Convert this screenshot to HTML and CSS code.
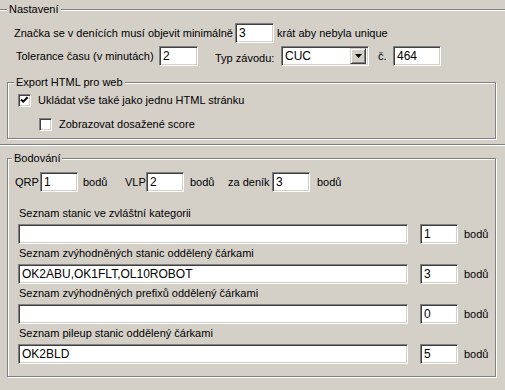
FILE: index.html
```html
<!DOCTYPE html>
<html>
<head>
<meta charset="utf-8">
<link rel="stylesheet" href="styles.css">
</head>
<body>
<div class="group g-main">
  <span class="gtitle">Nastavení</span>
  <div class="row r1">
    <span class="lbl w-znacka">Značka se v denících musí objevit minimálně</span>
    <div class="edit w39">3</div>
    <span class="lbl ml3">krát aby nebyla unique</span>
  </div>
  <div class="row r2">
    <span class="lbl w-tol">Tolerance času (v minutách)</span>
    <div class="edit w39">2</div>
    <span class="lbl w-typ">Typ závodu:</span>
    <div class="combo">
      <span class="combo-text">CUC</span>
      <span class="combo-btn"><svg width="7" height="4" viewBox="0 0 7 4"><path d="M0 0h7L3.5 4z" fill="#000"/></svg></span>
    </div>
    <span class="lbl w-c">č.</span>
    <div class="edit w48">464</div>
  </div>
  <div class="group g-export">
    <span class="gtitle">Export HTML pro web</span>
    <div class="crow c1">
      <span class="check"><svg width="9" height="9" viewBox="0 0 9 9"><path d="M1 3.5l2.2 2.2L7.6 1.3" fill="none" stroke="#000" stroke-width="2"/></svg></span>
      <span class="lbl">Ukládat vše také jako jednu HTML stránku</span>
    </div>
    <div class="crow c2">
      <span class="check"></span>
      <span class="lbl">Zobrazovat dosažené score</span>
    </div>
  </div>
</div>
<div class="group g-body">
  <span class="gtitle">Bodování</span>
  <div class="row r-qrp">
    <span class="lbl w-qrp">QRP</span>
    <div class="edit w38">1</div>
    <span class="lbl w-b1">bodů</span>
    <span class="lbl w-vlp">VLP</span>
    <div class="edit w38">2</div>
    <span class="lbl w-b2">bodů</span>
    <span class="lbl w-zd">za deník</span>
    <div class="edit w38">3</div>
    <span class="lbl ml7">bodů</span>
  </div>
  <div class="list first">
    <div class="list-label">Seznam stanic ve zvláštní kategorii</div>
    <div class="row">
      <div class="edit wide"></div>
      <div class="edit w38 ml12">1</div>
      <span class="lbl ml6">bodů</span>
    </div>
  </div>
  <div class="list">
    <div class="list-label">Seznam zvýhodněných stanic oddělený čárkami</div>
    <div class="row">
      <div class="edit wide">OK2ABU,OK1FLT,OL10ROBOT</div>
      <div class="edit w38 ml12">3</div>
      <span class="lbl ml6">bodů</span>
    </div>
  </div>
  <div class="list">
    <div class="list-label">Seznam zvýhodněných prefixů oddělený čárkami</div>
    <div class="row">
      <div class="edit wide"></div>
      <div class="edit w38 ml12">0</div>
      <span class="lbl ml6">bodů</span>
    </div>
  </div>
  <div class="list">
    <div class="list-label">Seznam pileup stanic oddělený čárkami</div>
    <div class="row">
      <div class="edit wide">OK2BLD</div>
      <div class="edit w38 ml12">5</div>
      <span class="lbl ml6">bodů</span>
    </div>
  </div>
</div>
</body>
</html>
```
FILE: styles.css
```css
html, body {
  margin: 0;
  padding: 0;
  background: #d4d0c8;
  width: 505px;
  height: 390px;
  overflow: hidden;
}
body {
  font-family: "Liberation Sans", Arial, sans-serif;
  font-size: 11px;
  line-height: 13px;
  color: #000;
}
.group {
  position: relative;
  border: 1px solid #808080;
  box-shadow: inset 1px 1px 0 #fff, 1px 1px 0 #fff;
}
.gtitle {
  position: absolute;
  top: -7px;
  left: 8px;
  padding: 0 2px;
  background: #d4d0c8;
  line-height: 13px;
  white-space: nowrap;
}
.g-main {
  margin: 9px 0 0 -2px;
  width: 512px;
  padding: 13px 0 5px 0;
}
.g-export .gtitle { left: 6px; }
.g-body .gtitle { left: 4px; }
.row {
  display: flex;
  align-items: center;
  height: 20px;
  white-space: nowrap;
}
.lbl { white-space: nowrap; }
.r1 { padding-left: 15px; }
.r2 { padding-left: 17px; margin-top: 3px; }
.w-znacka { width: 221px; }
.w-tol { width: 143px; }
.w-typ { width: 66px; margin-left: 17px; padding-top: 4px; }
.w-c { width: 15px; margin-left: 9px; }
.ml3 { margin-left: 3px; }
.ml6 { margin-left: 6px; }
.ml7 { margin-left: 7px; }
.ml12 { margin-left: 12px; }
.edit {
  box-sizing: border-box;
  height: 20px;
  background: #fff;
  border-top: 1px solid #808080;
  border-left: 1px solid #808080;
  border-bottom: 1px solid #fff;
  border-right: 1px solid #fff;
  box-shadow: inset 1px 1px 0 #404040, inset -1px -1px 0 #d4d0c8;
  padding: 2px 0 0 3px;
  line-height: 14px;
  font-size: 12px;
  white-space: nowrap;
  overflow: hidden;
}
.w39 { width: 39px; }
.w38 { width: 38px; }
.w48 { width: 48px; }
.wide { width: 390px; }
.combo {
  box-sizing: border-box;
  width: 88px;
  height: 20px;
  background: #fff;
  border-top: 1px solid #808080;
  border-left: 1px solid #808080;
  border-bottom: 1px solid #fff;
  border-right: 1px solid #fff;
  box-shadow: inset 1px 1px 0 #404040, inset -1px -1px 0 #d4d0c8;
  padding: 2px 2px 2px 3px;
  display: flex;
  align-items: stretch;
}
.combo-text {
  flex: 1;
  font-size: 12px;
  line-height: 14px;
}
.combo-btn {
  box-sizing: border-box;
  width: 16px;
  margin-top: -1px;
  margin-bottom: -1px;
  background: #d4d0c8;
  border-top: 1px solid #d4d0c8;
  border-left: 1px solid #d4d0c8;
  border-bottom: 1px solid #404040;
  border-right: 1px solid #404040;
  box-shadow: inset 1px 1px 0 #fff, inset -1px -1px 0 #808080;
  display: flex;
  align-items: center;
  justify-content: center;
}
.g-export {
  margin: 16px 0 0 8px;
  width: 489px;
  box-sizing: border-box;
  padding: 11px 0 7px 0;
}
.crow {
  display: flex;
  align-items: center;
  height: 13px;
  white-space: nowrap;
}
.c1 { padding-left: 10px; }
.c2 { padding-left: 31px; margin-top: 11px; }
.check {
  box-sizing: border-box;
  width: 13px;
  height: 13px;
  background: #fff;
  border-top: 1px solid #808080;
  border-left: 1px solid #808080;
  border-bottom: 1px solid #fff;
  border-right: 1px solid #fff;
  box-shadow: inset 1px 1px 0 #404040, inset -1px -1px 0 #d4d0c8;
  margin-right: 7px;
  display: flex;
  align-items: center;
  justify-content: center;
}
.g-body {
  margin: 13px 0 0 7px;
  width: 489px;
  box-sizing: border-box;
  padding: 13px 0 12px 0;
}
.r-qrp { padding-left: 7px; }
.w-qrp { width: 25px; }
.w-b1 { width: 42px; margin-left: 5px; }
.w-vlp { width: 21px; }
.w-b2 { width: 38px; margin-left: 6px; }
.w-zd { width: 44px; }
.list { padding-left: 10px; margin-top: 1px; }
.list.first { margin-top: 13px; }
.list-label {
  padding-left: 1px;
  height: 19px;
  line-height: 14px;
  padding-top: 1px;
  box-sizing: border-box;
}
```
